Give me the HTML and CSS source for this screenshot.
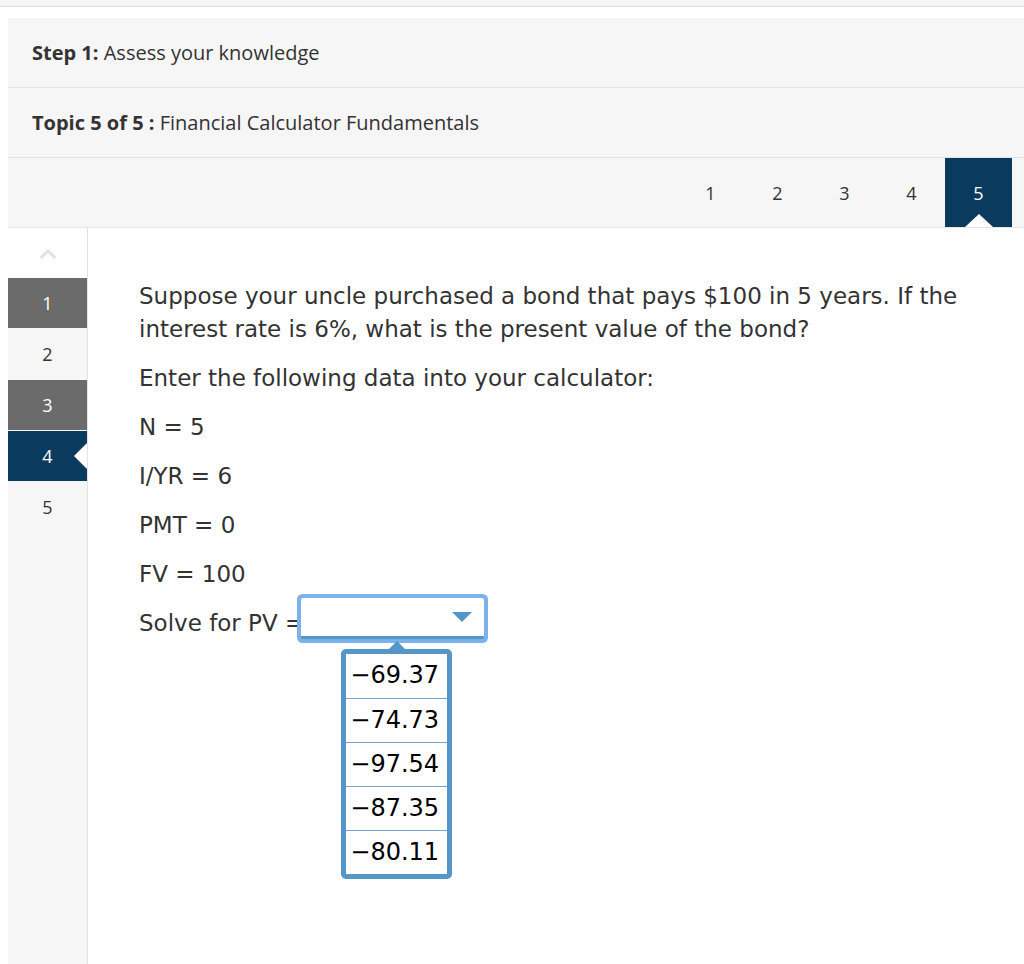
FILE: index.html
```html
<!DOCTYPE html>
<html>
<head>
<meta charset="utf-8">
<link rel="stylesheet" href="styles.css">
</head>
<body>
<div class="topbar"></div>
<div class="wrap">
  <div class="header">
    <div class="row"><b>Step 1:</b>&nbsp;Assess your knowledge</div>
    <div class="row"><b>Topic 5 of 5 :</b>&nbsp;Financial Calculator Fundamentals</div>
    <div class="row pager">
      <div class="pg">1</div>
      <div class="pg">2</div>
      <div class="pg">3</div>
      <div class="pg">4</div>
      <div class="pg active">5</div>
    </div>
  </div>
  <div class="body">
    <div class="sidebar">
      <div class="chev">
        <svg width="20" height="11" viewBox="0 0 20 11"><path d="M2.5 10 L10 3 L17.5 10" fill="none" stroke="#e4e4e4" stroke-width="3.2"/></svg>
      </div>
      <div class="si done">1</div>
      <div class="si">2</div>
      <div class="si done">3</div>
      <div class="si cur">4</div>
      <div class="si">5</div>
    </div>
    <div class="main">
      <p>Suppose your uncle purchased a bond that pays $100 in 5 years. If the interest rate is 6%, what is the present value of the bond?</p>
      <p>Enter the following data into your calculator:</p>
      <p>N = 5</p>
      <p>I/YR = 6</p>
      <p>PMT = 0</p>
      <p>FV = 100</p>
      <p>Solve for PV =<span class="select"><span class="arrow"></span>
        <span class="list">
          <span class="opt">−69.37</span>
          <span class="opt">−74.73</span>
          <span class="opt">−97.54</span>
          <span class="opt">−87.35</span>
          <span class="opt">−80.11</span>
        </span>
      </span></p>
    </div>
  </div>
</div>
</body>
</html>
```
FILE: styles.css
```css
html, body { margin: 0; padding: 0; background: #fff; }
body { font-family: "Open Sans", "DejaVu Sans", sans-serif; color: #333; }
.topbar { height: 6px; background: #f6f6f6; border-bottom: 1px solid #dcdcdc; }
.wrap { padding: 11px 0 0 8px; }
.header { background: #f6f6f6; }
.row { height: 69px; border-bottom: 1px solid #e4e4e4; display: flex; align-items: center; padding-left: 24px; font-size: 20px; }
.row b { font-weight: 700; }
.pager { justify-content: flex-end; padding-right: 12px; align-items: stretch; font-size: 18px; }
.pg { width: 67px; display: flex; align-items: center; justify-content: center; position: relative; }
.pg.active { background: #0b3a5f; color: #fff; }
.pg.active::after { content: ""; position: absolute; bottom: 0; left: 50%; margin-left: -14px; border-left: 14px solid transparent; border-right: 14px solid transparent; border-bottom: 13px solid #fff; }
.body { display: flex; height: 736px; }
.sidebar { width: 79px; background: #f6f6f6; border-right: 1px solid #e2e2e2; flex: none; }
.chev { height: 50px; background: #fff; display: flex; justify-content: center; padding-top: 20px; box-sizing: border-box; }
.si { height: 50px; margin-bottom: 1px; display: flex; align-items: center; justify-content: center; font-size: 18px; position: relative; }
.si:last-child { margin-bottom: 0; }
.si.done { background: #6b6b6b; color: #fff; }
.si.cur { background: #0b3a5f; color: #fff; }
.si.cur::after { content: ""; position: absolute; right: 0; top: 50%; margin-top: -13px; border-top: 13px solid transparent; border-bottom: 13px solid transparent; border-right: 13px solid #fff; }
.main { flex: 1; padding: 52px 40px 0 51px; font-family: "DejaVu Sans", Verdana, sans-serif; font-size: 23px; color: #333; }
.main p { margin: 0 0 16px; line-height: 33px; }
.select { display: inline-block; position: relative; width: 183px; height: 38px; background: #fff; border-bottom: 3px solid #5596c8; box-shadow: 0 0 0 4px #7db1ea; border-radius: 2px; vertical-align: middle; margin: -8px 0 -8px 0px; left: -3px; top: -6px; }
.arrow { position: absolute; right: 12px; top: 14px; border-left: 10px solid transparent; border-right: 10px solid transparent; border-top: 10px solid #5596c8; }
.list { position: absolute; left: 40px; top: 51px; width: 101px; border: 5px solid #5596c8; border-radius: 5px; background: #fff; display: flex; flex-direction: column; color: #000; font-size: 24px; }
.list::before { content: ""; position: absolute; left: 50%; margin-left: -8px; top: -13px; border-left: 8px solid transparent; border-right: 8px solid transparent; border-bottom: 8px solid #5596c8; }
.opt { height: 43px; line-height: 43px; padding-left: 4px; border-top: 1px solid #6ea4d2; }
.opt:first-child { border-top: 0; height: 44px; }
```
